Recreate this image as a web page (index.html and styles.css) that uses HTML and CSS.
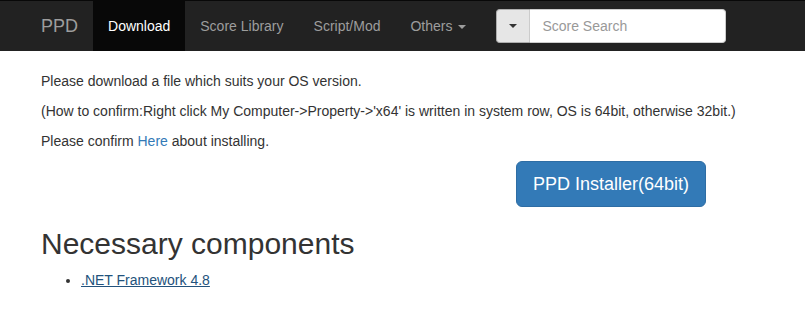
FILE: index.html
```html
<!DOCTYPE html>
<html>
<head>
<meta charset="utf-8">
<link rel="stylesheet" href="styles.css">
</head>
<body>
<nav class="navbar">
  <div class="container nav-inner">
    <a class="brand" href="#">PPD</a>
    <ul class="nav">
      <li class="active"><a href="#">Download</a></li>
      <li><a href="#">Score Library</a></li>
      <li><a href="#">Script/Mod</a></li>
      <li><a href="#">Others <span class="caret"></span></a></li>
    </ul>
    <form class="search">
      <button type="button" class="search-btn"><span class="caret dark"></span></button>
      <input class="search-input" type="text" placeholder="Score Search">
    </form>
  </div>
</nav>
<main class="container">
  <p>Please download a file which suits your OS version.</p>
  <p>(How to confirm:Right click My Computer-&gt;Property-&gt;'x64' is written in system row, OS is 64bit, otherwise 32bit.)</p>
  <p>Please confirm <a class="link" href="#">Here</a> about installing.</p>
  <div class="dl-row">
    <a class="btn-primary" href="#">PPD Installer(64bit)</a>
  </div>
  <h2>Necessary components</h2>
  <ul class="comp">
    <li><a class="ulink" href="#">.NET Framework 4.8</a></li>
  </ul>
</main>
</body>
</html>
```
FILE: styles.css
```css
* { box-sizing: border-box; }
body {
  margin: 0;
  font-family: "Liberation Sans", Arial, sans-serif;
  font-size: 14px;
  line-height: 20px;
  color: #333;
  background: #fff;
}
.container {
  width: 753px;
  margin: 0 auto;
  padding: 0 15px;
}
.navbar {
  background: #222;
  border-top: 1px solid #080808;
  height: 51px;
  margin-bottom: 20px;
}
.nav-inner {
  display: flex;
  align-items: flex-start;
  height: 50px;
}
.brand {
  font-size: 18px;
  line-height: 20px;
  padding: 15px 15px;
  margin-left: -15px;
  color: #9d9d9d;
  text-decoration: none;
  height: 50px;
}
.nav {
  display: flex;
  list-style: none;
  margin: 0;
  padding: 0;
}
.nav a {
  display: block;
  padding: 15px;
  color: #9d9d9d;
  text-decoration: none;
  line-height: 20px;
}
.nav .active a {
  background: #080808;
  color: #fff;
}
.caret {
  display: inline-block;
  width: 0;
  height: 0;
  margin-left: 2px;
  vertical-align: middle;
  border-top: 4px solid #9d9d9d;
  border-left: 4px solid transparent;
  border-right: 4px solid transparent;
}
.caret.dark { border-top-color: #333; margin-left: 0; }
.search {
  display: flex;
  margin: 8px 0 0 15px;
  height: 34px;
}
.search-btn {
  width: 34px;
  height: 34px;
  background: #e6e6e6;
  border: 1px solid #adadad;
  border-right-color: #ccc;
  border-radius: 4px 0 0 4px;
  padding: 0;
  display: flex;
  align-items: center;
  justify-content: center;
}
.search-input {
  width: 196px;
  height: 34px;
  border: 1px solid #ccc;
  border-left: 0;
  border-radius: 0 4px 4px 0;
  padding: 6px 12px;
  font-family: "Liberation Sans", Arial, sans-serif;
  font-size: 14px;
  color: #555;
  background: #fff;
  outline: none;
}
.search-input::placeholder { color: #999; }
p { margin: 0 0 10px; }
.link { color: #337ab7; text-decoration: none; }
.dl-row {
  display: flex;
  padding-left: 475px;
}
.btn-primary {
  display: inline-block;
  padding: 10px 16px;
  font-size: 18px;
  line-height: 24px;
  color: #fff;
  background: #337ab7;
  border: 1px solid #2e6da4;
  border-radius: 6px;
  text-decoration: none;
  white-space: nowrap;
}
h2 {
  font-family: "Liberation Sans", Arial, sans-serif;
  font-weight: 500;
  font-size: 30px;
  line-height: 33px;
  margin: 20px 0 10px;
  color: #333;
}
.comp {
  margin: 0 0 10px;
  padding-left: 40px;
}
.ulink { color: #23527c; text-decoration: underline; }
```
